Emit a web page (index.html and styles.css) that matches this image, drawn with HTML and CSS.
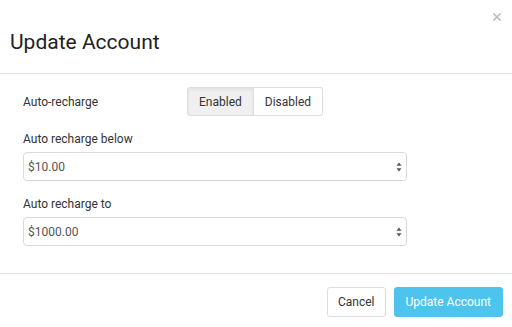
FILE: index.html
```html
<!DOCTYPE html>
<html lang="en">
<head>
    <meta charset="UTF-8">
    <meta name="viewport" content="width=device-width, initial-scale=1.0">
    <title>Update Account</title>
    <link rel="stylesheet" href="styles.css">
</head>
<body>
    <div class="modal">
        <div class="modal-header">
            <button class="close" aria-label="Close">
                <svg width="8" height="8" viewBox="0 0 8 8"><path d="M1 1L7 7M7 1L1 7" stroke="#bdbdbd" stroke-width="1.7" stroke-linecap="square"/></svg>
            </button>
            <h4 class="modal-title">Update Account</h4>
        </div>

        <div class="modal-body">
            <div class="toggle-row">
                <span class="toggle-label">Auto-recharge</span>
                <div class="btn-group">
                    <button class="btn btn-toggle active">Enabled</button>
                    <button class="btn btn-toggle">Disabled</button>
                </div>
            </div>

            <div class="form-group">
                <label for="rechargeBelow">Auto recharge below</label>
                <div class="select-wrap">
                    <select id="rechargeBelow" class="form-control">
                        <option>$10.00</option>
                        <option>$25.00</option>
                        <option>$50.00</option>
                    </select>
                    <svg class="select-arrows" width="6" height="10" viewBox="0 0 6 10"><path d="M3 0.5L5.5 3.8H0.5Z M3 9.5L5.5 6.2H0.5Z" fill="#555"/></svg>
                </div>
            </div>

            <div class="form-group">
                <label for="rechargeTo">Auto recharge to</label>
                <div class="select-wrap">
                    <select id="rechargeTo" class="form-control">
                        <option>$1000.00</option>
                        <option>$500.00</option>
                        <option>$250.00</option>
                    </select>
                    <svg class="select-arrows" width="6" height="10" viewBox="0 0 6 10"><path d="M3 0.5L5.5 3.8H0.5Z M3 9.5L5.5 6.2H0.5Z" fill="#555"/></svg>
                </div>
            </div>
        </div>

        <div class="modal-footer">
            <button class="btn btn-default">Cancel</button>
            <button class="btn btn-info">Update Account</button>
        </div>
    </div>
</body>
</html>
```

FILE: styles.css
```css
body {
    font-family: Roboto, "Liberation Sans", Arial, sans-serif;
    font-size: 12px;
    color: #333;
    margin: 0;
    background: #fff;
}

.modal {
    display: flex;
    flex-direction: column;
    height: 327px;
}

.modal-header {
    position: relative;
    padding: 30px 10px 19px;
    border-bottom: 1px solid #e5e5e5;
}

.modal-title {
    margin: 0;
    font-size: 21px;
    line-height: 24px;
    font-weight: 400;
    color: #222;
}

.close {
    position: absolute;
    top: 13px;
    right: 11px;
    padding: 0;
    border: none;
    background: none;
    line-height: 0;
    cursor: pointer;
}

.modal-body {
    flex: 1;
    padding: 13px 105px 0 23px;
}

.toggle-row {
    display: flex;
    align-items: center;
}

.toggle-label {
    width: 164px;
    color: #333;
}

.btn-group {
    display: flex;
}

.btn {
    font-family: inherit;
    font-size: 12px;
    line-height: 16px;
    padding: 6px 11px;
    border: 1px solid #ddd;
    border-radius: 3px;
    background: #fff;
    color: #333;
    cursor: pointer;
}

.btn-toggle {
    height: 29px;
}

.btn-group .btn-toggle:first-child {
    border-radius: 3px 0 0 3px;
}

.btn-group .btn-toggle:last-child {
    border-left: none;
    border-radius: 0 3px 3px 0;
}

.btn-toggle.active {
    background: #f0f0f0;
    box-shadow: inset 0 2px 4px rgba(0, 0, 0, 0.06);
}

.form-group {
    margin-top: 14px;
}

.form-group label {
    display: block;
    line-height: 18px;
    margin-bottom: 4px;
    color: #333;
}

.select-wrap {
    position: relative;
}

.form-control {
    display: block;
    width: 100%;
    height: 29px;
    padding: 0 4px;
    font-family: inherit;
    font-size: 12px;
    color: #555;
    background: #fff;
    border: 1px solid #d9d9d9;
    border-radius: 4px;
    -webkit-appearance: none;
    appearance: none;
}

.select-arrows {
    position: absolute;
    right: 5px;
    top: 10px;
    pointer-events: none;
}

.modal-footer {
    display: flex;
    justify-content: flex-end;
    gap: 8px;
    padding: 13px 9px 10px;
    border-top: 1px solid #e5e5e5;
}

.modal-footer .btn {
    height: 30px;
    padding: 6px 10px;
}

.modal-footer .btn-info {
    padding: 6px 11px;
    background: #4dc4ee;
    border-color: #4dc4ee;
    color: #fff;
}
```
